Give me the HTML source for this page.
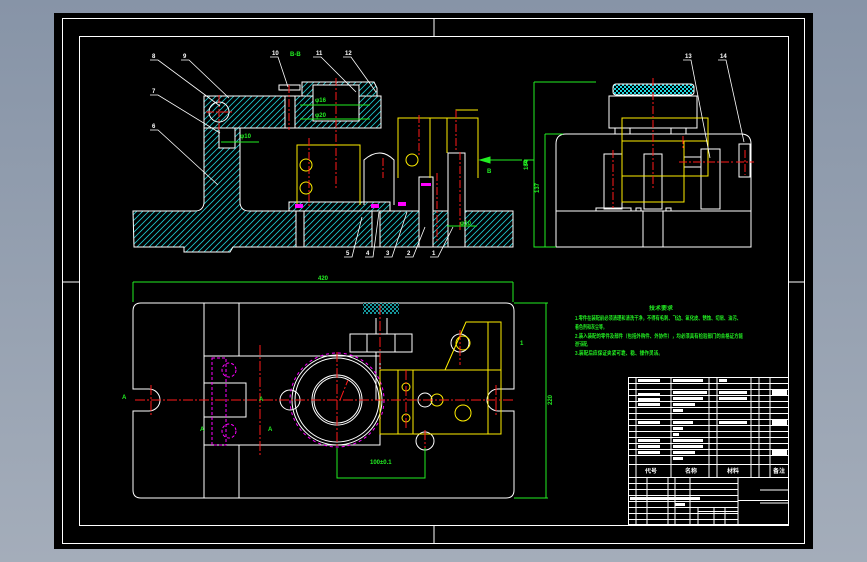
<!DOCTYPE html>
<html><head><meta charset="utf-8"><style>
html,body{margin:0;padding:0;width:867px;height:562px;overflow:hidden;background:#8f9bab}
svg{display:block}
text{font-family:"Liberation Sans","Noto Sans CJK SC",sans-serif;font-weight:bold}
</style></head><body>
<svg width="867" height="562" viewBox="0 0 867 562" xmlns="http://www.w3.org/2000/svg">
<defs>
<linearGradient id="bg" x1="0" y1="0" x2="0" y2="1"><stop offset="0" stop-color="#8794a7"/><stop offset="1" stop-color="#a4adba"/></linearGradient>
<pattern id="h" width="6" height="6" patternUnits="userSpaceOnUse"><path d="M-1,7 L7,-1 M-4,4 L4,-4 M2,10 L10,2" stroke="#1fc9d0" stroke-width="0.8"/></pattern>
<pattern id="k" width="4" height="4" patternUnits="userSpaceOnUse"><rect width="4" height="4" fill="#1fd8e0"/><rect width="2" height="2" fill="#000"/><rect x="2" y="2" width="2" height="2" fill="#000"/></pattern>
</defs>
<rect width="867" height="562" fill="url(#bg)"/>
<rect x="54" y="13" width="759" height="536" fill="#000"/>
<g fill="none" stroke="#fff" stroke-width="1">
<rect x="62.5" y="18.5" width="742" height="525"/>
<rect x="79.5" y="36.5" width="709" height="489"/>
<path d="M434 19v17M434 526v17M63 282h16M789 282h16"/>
</g>

<!-- FRONT VIEW -->
<g stroke="#fff" stroke-width="1">
<path d="M133 211h62q8 0 9-8v-75h36v75q1 8 9 8h264v36h-280l-3 5h-46v-5h-50z" fill="url(#h)"/>
<rect x="204" y="96" width="177" height="32" fill="url(#h)"/>
<rect x="289" y="202" width="101" height="9" fill="url(#h)"/>
<path d="M302 96v-14h72l3 6v8" fill="url(#h)"/>
<rect x="313" y="85" width="46" height="36" fill="#000"/>
<rect x="285" y="96" width="10" height="32" fill="#000"/>
<rect x="279" y="85" width="21" height="5" fill="#000"/>
<rect x="296" y="211" width="8" height="36" fill="#000"/>
<rect x="372" y="211" width="8" height="36" fill="#000"/>
<rect x="419" y="177" width="14" height="70" fill="#000"/>
<rect x="448" y="153" width="17" height="94" fill="#000"/>
<rect x="219" y="128" width="16" height="20" fill="#000"/>
<circle cx="219" cy="112" r="10" fill="none"/>
<path d="M364 205v-45q16-14 30 0v45" fill="none"/>
</g>
<g fill="none" stroke="#ffee00" stroke-width="1">
<path d="M297 205v-60h63v60"/><path d="M398 178v-60h80v60"/>
<path d="M447 118v35M430 118v60M456 118v-8h22"/>
<circle cx="306" cy="165" r="6"/><circle cx="306" cy="188" r="6"/><circle cx="412" cy="160" r="6"/>
</g>
<g stroke="#ff1a1a" stroke-width="1" stroke-dasharray="8 2 2 2">
<path d="M336 78v110M289 85v45M309 138v70M419 115v40M437 173v70M456 110v40M460 152v80M206 112h28M219 95v35M383 158v20"/>
</g>
<g fill="#ff00ff"><rect x="295" y="204" width="8" height="4"/><rect x="371" y="204" width="8" height="4"/><rect x="398" y="202" width="8" height="4"/><rect x="421" y="183" width="10" height="3"/></g>
<g stroke="#22ee22" stroke-width="1" fill="none">
<path d="M480 160h42"/><path d="M480 160l10-3v6z" fill="#22ee22"/>
<path d="M300 105h70M300 119h70M447 226h30M221 142h38"/>
</g>
<g fill="#22ee22" font-size="6"><text x="487" y="173">B</text><text x="290" y="56">B-B</text><text x="315" y="102">φ16</text><text x="315" y="117">φ20</text><text x="460" y="225">φ10</text><text x="240" y="138">φ10</text><text x="523" y="165">B</text></g>
<g stroke="#fff" stroke-width="0.8" fill="none">
<path d="M150 60h8l62 46M181 60h8l40 38M150 95h8l62 38M150 130h8l60 55M270 57h8l10 30M313 57h8l35 35M343 57h8l25 35M344 257h8l10-40M365 257h8l6-45M384 257h8l15-45M405 257h8l12-30M430 257h8l15-30"/>
</g>
<g fill="#fff" font-size="6"><text x="152" y="58">8</text><text x="183" y="58">9</text><text x="152" y="93">7</text><text x="152" y="128">6</text><text x="272" y="55">10</text><text x="316" y="55">11</text><text x="345" y="55">12</text><text x="346" y="255">5</text><text x="366" y="255">4</text><text x="386" y="255">3</text><text x="407" y="255">2</text><text x="432" y="255">1</text></g>

<!-- SIDE VIEW -->
<g stroke="#fff" stroke-width="1" fill="none">
<path d="M556 247v-103q0-10 10-10h175q10 0 10 10v103z"/>
<path d="M556 211h195M643 211v36M663 211v36"/>
<rect x="609" y="96" width="88" height="32"/>
<rect x="615" y="128" width="15" height="6"/><rect x="671" y="128" width="15" height="6"/>
<rect x="604" y="154" width="18" height="55"/><rect x="644" y="154" width="18" height="55"/>
<rect x="701" y="149" width="19" height="60"/>
<rect x="684" y="157" width="17" height="10"/>
<rect x="739" y="144" width="11" height="33"/>
<path d="M596 211v-3h35v3M636 211v-3h5v3M666 211v-3h5v3"/>
</g>
<rect x="613" y="84" width="81" height="11" rx="3" fill="url(#k)" stroke="#fff"/>
<g fill="none" stroke="#ffee00" stroke-width="1"><rect x="622" y="118" width="86" height="58"/><path d="M622 141h86M684 141v61h-62v-26"/></g>
<g stroke="#ff1a1a" stroke-width="1" stroke-dasharray="8 2 2 2"><path d="M653 78v112M613 150v58M683 136v12M679 162h55M736 162h18M745 150v25"/></g>
<g stroke="#22ee22" stroke-width="1" fill="none"><path d="M534 82h62M534 82v165h22M545 134h18M545 134v113M524 160h10"/></g>
<g fill="#22ee22" font-size="6"><text x="528" y="170" transform="rotate(-90 528 170)">184</text><text x="539" y="193" transform="rotate(-90 539 193)">137</text></g>
<g stroke="#fff" stroke-width="0.8" fill="none"><path d="M683 60h8l19 98M718 60h8l18 82"/></g>
<g fill="#fff" font-size="6"><text x="685" y="58">13</text><text x="720" y="58">14</text></g>

<!-- PLAN VIEW -->
<g stroke="#fff" stroke-width="1" fill="none">
<path d="M141 303h365q8 0 8 8v78h-16a11 11 0 0 0 0 22h16v79q0 8-8 8h-365q-8 0-8-8v-79h16a11 11 0 0 0 0-22h-16v-78q0-8 8-8z"/>
<path d="M204 303v195M239 303v53M239 445v53"/>
<rect x="204" y="356" width="176" height="89"/><rect x="204" y="383" width="42" height="34"/>
<circle cx="337" cy="400" r="45"/><circle cx="337" cy="400" r="42"/><circle cx="337" cy="400" r="25"/><circle cx="337" cy="400" r="23"/>
<circle cx="290" cy="400" r="10"/><circle cx="425" cy="441" r="9"/><circle cx="425" cy="400" r="7"/><circle cx="460" cy="343" r="9"/>
<rect x="350" y="334" width="62" height="18"/><path d="M367 334v18M395 334v18M376 318v16M387 318v16M376 352v48"/>
</g>
<rect x="363" y="303" width="36" height="11" fill="url(#k)" opacity="0.7"/>
<circle cx="337" cy="400" r="47" fill="none" stroke="#ff00ff" stroke-dasharray="3 3"/>
<g fill="none" stroke="#ff00ff" stroke-dasharray="3 2"><rect x="212" y="358" width="14" height="87"/><circle cx="229" cy="370" r="7"/><circle cx="229" cy="431" r="7"/></g>
<g fill="none" stroke="#ffee00" stroke-width="1">
<path d="M380 370h121v64h-121zM398 370v64M413 370v64M445 370l21-48h35v48M488 322v112"/>
<circle cx="406" cy="387" r="4"/><circle cx="406" cy="418" r="4"/><circle cx="463" cy="343" r="7"/><circle cx="463" cy="413" r="8"/><circle cx="437" cy="400" r="6"/>
</g>
<g stroke="#ff1a1a" stroke-width="1" stroke-dasharray="10 2 2 2"><path d="M135 400h380M337 352v96M151 385v30M496 385v30M260 345v110M380 305v65M425 430v20M460 330v35M406 370v60M340 400l8-20"/></g>
<g stroke="#22ee22" stroke-width="1" fill="none"><path d="M133 282h380M133 282v20M513 282v20M546 303v195M514 303h34M514 498h34M337 448v30h88v-30"/></g>
<g fill="#22ee22" font-size="6"><text x="318" y="280">420</text><text x="370" y="464">100±0.1</text><text x="552" y="405" transform="rotate(-90 552 405)">220</text><text x="122" y="399">A</text><text x="200" y="431">A</text><text x="259" y="401">A</text><text x="268" y="431">A</text><text x="520" y="345">1</text></g>

<!-- TECH REQ -->
<g fill="#22ee22" font-size="5.5">
<text x="649" y="310" textLength="24" lengthAdjust="spacingAndGlyphs">技术要求</text>
<text x="575" y="320" textLength="166" lengthAdjust="spacingAndGlyphs">1.零件在装配前必须清理和清洗干净，不得有毛刺、飞边、氧化皮、锈蚀、切屑、油污、</text>
<text x="575" y="329" textLength="32" lengthAdjust="spacingAndGlyphs">着色剂和灰尘等。</text>
<text x="575" y="338" textLength="168" lengthAdjust="spacingAndGlyphs">2.装入装配的零件及部件（包括外购件、外协件），均必须具有检验部门的合格证方能</text>
<text x="575" y="346" textLength="15" lengthAdjust="spacingAndGlyphs">进行装配。</text>
<text x="575" y="355" textLength="88" lengthAdjust="spacingAndGlyphs">3.装配后应保证夹紧可靠、稳、操作灵活。</text>
</g>

<!-- TITLE TABLE -->
<g stroke="#fff" stroke-width="1" fill="none">
<rect x="628.5" y="377.5" width="160" height="147"/>
<path d="M636 377v100M671 377v100M709 377v100M717 377v100M751 377v100M759 377v100M770 377v100"/>
<path d="M628 383.5h160M628 389.5h160M628 395.5h160M628 401.5h160M628 407.5h160M628 413.5h160M628 419.5h160M628 425.5h160M628 431.5h160M628 437.5h160M628 443.5h160M628 449.5h160M628 455.5h160M628 464.5h160M628 477.5h160"/>
<path d="M628 483.5h110M628 489.5h110M628 495.5h110M628 501.5h110M628 507.5h110M628 513.5h110M628 519.5h110M636 477v48M647 477v48M668 477v48M675 477v48M690 477v48M738 477v48M738 500.5h50M738 511.5h-40M698 507v18M714 507v18M725 507v18M760 490h28M760 503h28"/>
</g>
<g fill="#fff">
<rect x="638" y="379" width="22" height="3"/><rect x="673" y="379" width="30" height="3"/><rect x="719" y="379" width="8" height="3"/>
<rect x="638" y="393" width="22" height="3"/><rect x="673" y="391" width="34" height="3"/><rect x="719" y="391" width="28" height="3"/><rect x="772" y="390" width="15" height="5"/>
<rect x="638" y="398" width="22" height="3"/><rect x="673" y="397" width="30" height="3"/><rect x="719" y="397" width="28" height="3"/>
<rect x="638" y="403" width="22" height="3"/><rect x="673" y="403" width="22" height="3"/><rect x="673" y="409" width="10" height="3"/>
<rect x="638" y="421" width="22" height="3"/><rect x="673" y="421" width="20" height="3"/><rect x="719" y="421" width="28" height="3"/><rect x="772" y="420" width="15" height="5"/>
<rect x="673" y="427" width="10" height="3"/><rect x="673" y="433" width="6" height="3"/>
<rect x="638" y="439" width="22" height="3"/><rect x="673" y="439" width="30" height="3"/>
<rect x="638" y="445" width="22" height="3"/><rect x="673" y="445" width="30" height="3"/>
<rect x="638" y="451" width="22" height="3"/><rect x="673" y="451" width="22" height="3"/><rect x="772" y="450" width="15" height="5"/>
<rect x="673" y="457" width="10" height="3"/>
<rect x="630" y="497" width="40" height="3"/><rect x="670" y="497" width="30" height="3"/><rect x="675" y="503" width="10" height="3"/>
</g>
<g fill="#fff" font-size="6"><text x="645" y="473">代号</text><text x="685" y="473">名称</text><text x="727" y="473">材料</text><text x="773" y="473">备注</text></g>
</svg>
</body></html>
